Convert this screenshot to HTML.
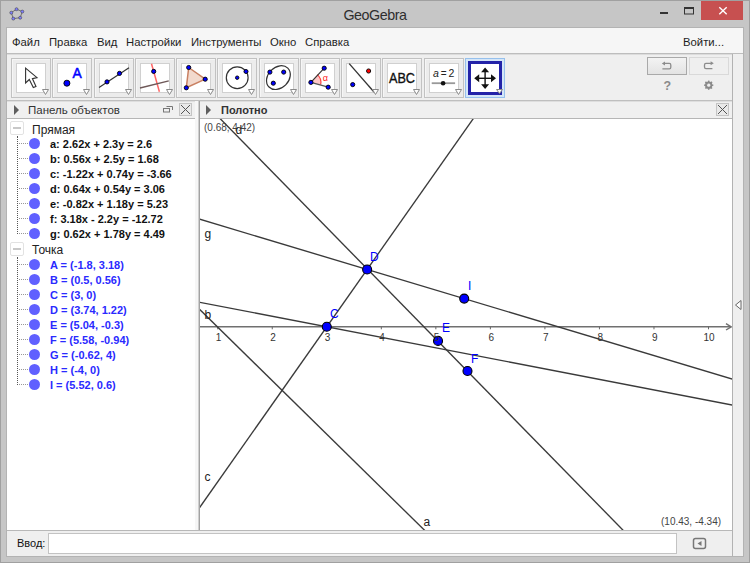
<!DOCTYPE html>
<html><head><meta charset="utf-8">
<style>
*{margin:0;padding:0;box-sizing:border-box}
html,body{width:750px;height:563px;overflow:hidden;background:#c6c6c6;font-family:"Liberation Sans",sans-serif;}
.a{position:absolute}
.t{position:absolute;white-space:nowrap;line-height:1}
#frame{left:0;top:0;width:750px;height:563px;border:1px solid #a0a0a0;background:#c6c6c6}
#content{left:6px;top:27px;width:738px;height:530px;background:#f0f0f0;border:1px solid #b3b3b3}
#menu{left:7px;top:28px;width:736px;height:26px;background:#f6f6f6;border-bottom:1px solid #bdbdbd}
.mi{position:absolute;top:36.5px;font-size:11.3px;line-height:1;color:#1e1e1e;white-space:nowrap}
#toolbar{left:7px;top:54px;width:726px;height:47px;background:#efefef;border-top:1px solid #dcdcdc;border-bottom:1px solid #bfbfbf}
.btn{position:absolute;top:58px;width:40px;height:40px;border:1px solid #c2c2c2;background:#ececec;box-shadow:inset 1px 1px 0 #f6f6f6}
.btn .in{position:absolute;left:4px;top:4px;width:30px;height:30px;background:#fff;border:1px solid #d0d0d0}
.btn svg{position:absolute;left:-1px;top:-1px}
#lp{left:7px;top:101px;width:188px;height:430px;background:#fff}
#lph{left:7px;top:101px;width:188px;height:18px;background:#f0f0f0;border-top:1px solid #dedede;border-bottom:1px solid #b6b6b6}
#split{left:195px;top:101px;width:5px;height:430px;background:linear-gradient(90deg,#f6f6f6 0,#f6f6f6 3px,#cfcfcf 3px,#cfcfcf 4px,#a2a2a2 4px)}
#gph{left:200px;top:101px;width:532px;height:18px;background:#f0f0f0;border-top:1px solid #dedede;border-bottom:1px solid #b6b6b6}
#gv{left:200px;top:119px;width:532px;height:411px;background:#fff}
#rs{left:732px;top:54px;width:11px;height:502px;background:#efefef;border-left:1px solid #b2b2b2}
#inp{left:7px;top:530px;width:725px;height:26px;background:#efefef;border-top:1px solid #b8b8b8}
#field{left:48px;top:533px;width:629px;height:21px;background:#fff;border:1px solid #c3c3c3}
.row{position:absolute;left:50px;font-size:11px;line-height:1;font-weight:bold;white-space:nowrap}
.dot{position:absolute;left:29px;width:11px;height:11px;border-radius:50%;background:#6060ff}
.lbl{position:absolute;font-size:12px;line-height:1;color:#0000ff;white-space:nowrap}
.glbl{position:absolute;font-size:12px;line-height:1;color:#222;white-space:nowrap}
.num{position:absolute;font-size:10px;line-height:1;color:#333;white-space:nowrap}
</style></head><body>
<div class="a" id="frame"></div>
<div class="t" style="left:0;top:8px;width:750px;text-align:center;font-size:14.3px;letter-spacing:-0.45px;color:#2e2e2e">GeoGebra</div>
<div class="a" id="content"></div>
<div class="a" id="menu"></div>
<div class="mi" style="left:12px">Файл</div>
<div class="mi" style="left:49px">Правка</div>
<div class="mi" style="left:97px">Вид</div>
<div class="mi" style="left:126px">Настройки</div>
<div class="mi" style="left:191px">Инструменты</div>
<div class="mi" style="left:270px">Окно</div>
<div class="mi" style="left:305px">Справка</div>
<div class="mi" style="left:683px">Войти...</div>
<div class="a" id="toolbar"></div>
<div class="a" id="rs"></div>
<div class="a" id="lp"></div>
<div class="a" id="lph"></div>
<div class="a" id="split"></div>
<div class="a" id="gph"></div>
<div class="a" id="gv"></div>
<div class="a" id="inp"></div>
<div class="a" id="field"></div>
<div class="t" style="left:17px;top:538px;font-size:11px;color:#111">Ввод:</div>
<div class="t" style="left:28px;top:105px;font-size:11.5px;color:#333">Панель объектов</div>
<div class="t" style="left:221px;top:105px;font-size:11px;font-weight:bold;color:#333">Полотно</div>

<div class="btn" style="left:11px"><div class="in"></div><svg width="40" height="40" viewBox="0 0 40 40"><path d="M14.6,10.1 L14.6,25 L18.3,21.5 L22.3,29.5 L25,28.4 L21.4,20.6 L26,19.6 Z" fill="#fff" stroke="#333" stroke-width="1.1" stroke-linejoin="miter"/><path d="M31.5,31.5 L37.5,31.5 L34.5,36.5 Z" fill="#fff" stroke="#8a8a8a" stroke-width="1"/></svg></div>
<div class="btn" style="left:52px"><div class="in"></div><svg width="40" height="40" viewBox="0 0 40 40"><circle cx="14.9" cy="25.2" r="3.02" fill="#0000ff" stroke="#000" stroke-width="0.9"/><text x="20.5" y="19.6" font-family="Liberation Sans" font-size="13.8" fill="#0000ff" stroke="#0000ff" stroke-width="0.5">A</text><path d="M31.5,31.5 L37.5,31.5 L34.5,36.5 Z" fill="#fff" stroke="#8a8a8a" stroke-width="1"/></svg></div>
<div class="btn" style="left:94px"><div class="in"></div><svg width="40" height="40" viewBox="0 0 40 40"><line x1="5" y1="29.5" x2="35" y2="9.8" stroke="#333" stroke-width="1.2"/><circle cx="13" cy="23.9" r="2.09" fill="#0000ff" stroke="#000" stroke-width="0.9"/><circle cx="25.5" cy="15.4" r="2.09" fill="#0000ff" stroke="#000" stroke-width="0.9"/><path d="M31.5,31.5 L37.5,31.5 L34.5,36.5 Z" fill="#fff" stroke="#8a8a8a" stroke-width="1"/></svg></div>
<div class="btn" style="left:135px"><div class="in"></div><svg width="40" height="40" viewBox="0 0 40 40"><line x1="16.5" y1="5.8" x2="24.4" y2="33.8" stroke="#ff6666" stroke-width="1.5"/><line x1="5" y1="30" x2="33.8" y2="22.8" stroke="#6e5858" stroke-width="1.3"/><circle cx="18.7" cy="13.4" r="2.09" fill="#0000ff" stroke="#000" stroke-width="0.9"/><path d="M31.5,31.5 L37.5,31.5 L34.5,36.5 Z" fill="#fff" stroke="#8a8a8a" stroke-width="1"/></svg></div>
<div class="btn" style="left:176px"><div class="in"></div><svg width="40" height="40" viewBox="0 0 40 40"><path d="M12.7,9.5 L29.2,21.2 L10.3,29.8 Z" fill="#f2d9cd" stroke="#c98062" stroke-width="1.5"/><circle cx="12.7" cy="9.5" r="2.09" fill="#0000ff" stroke="#000" stroke-width="0.9"/><circle cx="29.2" cy="21.2" r="2.09" fill="#0000ff" stroke="#000" stroke-width="0.9"/><circle cx="10.3" cy="29.8" r="2.09" fill="#0000ff" stroke="#000" stroke-width="0.9"/><path d="M31.5,31.5 L37.5,31.5 L34.5,36.5 Z" fill="#fff" stroke="#8a8a8a" stroke-width="1"/></svg></div>
<div class="btn" style="left:217px"><div class="in"></div><svg width="40" height="40" viewBox="0 0 40 40"><circle cx="20.2" cy="19.7" r="10.9" fill="none" stroke="#333" stroke-width="1.2"/><circle cx="20.2" cy="19.7" r="1.73" fill="#0000ff" stroke="#000" stroke-width="0.9"/><circle cx="29" cy="13.5" r="2.02" fill="#0000ff" stroke="#000" stroke-width="0.9"/><path d="M31.5,31.5 L37.5,31.5 L34.5,36.5 Z" fill="#fff" stroke="#8a8a8a" stroke-width="1"/></svg></div>
<div class="btn" style="left:259px"><div class="in"></div><svg width="40" height="40" viewBox="0 0 40 40"><ellipse cx="19.4" cy="19.6" rx="13.3" ry="10.3" transform="rotate(-45 19.4 19.6)" fill="none" stroke="#333" stroke-width="1.2"/><circle cx="10.9" cy="14.1" r="2.09" fill="#0000ff" stroke="#000" stroke-width="0.9"/><circle cx="24.7" cy="14.1" r="2.09" fill="#0000ff" stroke="#000" stroke-width="0.9"/><circle cx="14.3" cy="25.2" r="2.09" fill="#0000ff" stroke="#000" stroke-width="0.9"/><path d="M31.5,31.5 L37.5,31.5 L34.5,36.5 Z" fill="#fff" stroke="#8a8a8a" stroke-width="1"/></svg></div>
<div class="btn" style="left:300px"><div class="in"></div><svg width="40" height="40" viewBox="0 0 40 40"><path d="M10.9,24.4 L17.3,16.6 A10,10 0 0 1 20.6,26.6 Z" fill="#ffc8c8" stroke="none"/><path d="M17.3,16.6 A10,10 0 0 1 20.6,26.6" fill="none" stroke="#ff4040" stroke-width="1.2"/><line x1="10.9" y1="24.4" x2="24.2" y2="10.2" stroke="#333" stroke-width="1.2"/><line x1="10.9" y1="24.4" x2="28.2" y2="29.2" stroke="#555" stroke-width="1.2"/><circle cx="10.9" cy="24.4" r="2.09" fill="#0000ff" stroke="#000" stroke-width="0.9"/><circle cx="24.2" cy="10.2" r="2.09" fill="#0000ff" stroke="#000" stroke-width="0.9"/><circle cx="28.2" cy="29.2" r="2.09" fill="#0000ff" stroke="#000" stroke-width="0.9"/><text x="22.8" y="22.5" font-family="Liberation Sans" font-size="9" fill="#ff2020">α</text><path d="M31.5,31.5 L37.5,31.5 L34.5,36.5 Z" fill="#fff" stroke="#8a8a8a" stroke-width="1"/></svg></div>
<div class="btn" style="left:341px"><div class="in"></div><svg width="40" height="40" viewBox="0 0 40 40"><line x1="8.2" y1="5.6" x2="33" y2="34" stroke="#333" stroke-width="1.3"/><circle cx="11.7" cy="26.6" r="2.09" fill="#0000ff" stroke="#000" stroke-width="0.9"/><circle cx="27.6" cy="13" r="2.09" fill="#ff0000" stroke="#000" stroke-width="0.9"/><path d="M31.5,31.5 L37.5,31.5 L34.5,36.5 Z" fill="#fff" stroke="#8a8a8a" stroke-width="1"/></svg></div>
<div class="btn" style="left:382px"><div class="in"></div><svg width="40" height="40" viewBox="0 0 40 40"><text x="7" y="24.7" font-family="Liberation Sans" font-size="14" textLength="26" lengthAdjust="spacingAndGlyphs" fill="#111" stroke="#111" stroke-width="0.35">ABC</text><path d="M31.5,31.5 L37.5,31.5 L34.5,36.5 Z" fill="#fff" stroke="#8a8a8a" stroke-width="1"/></svg></div>
<div class="btn" style="left:424px"><div class="in"></div><svg width="40" height="40" viewBox="0 0 40 40"><text x="8.9" y="18.9" font-family="Liberation Sans" font-size="10.5" font-style="italic" fill="#222">a</text><text x="16.7" y="18.9" font-family="Liberation Sans" font-size="10" fill="#222">=</text><text x="24.6" y="18.9" font-family="Liberation Sans" font-size="10.5" fill="#222">2</text><line x1="7.7" y1="25.2" x2="31.1" y2="25.2" stroke="#999" stroke-width="1.8"/><circle cx="19.1" cy="25.2" r="2.3" fill="#111"/><path d="M31.5,31.5 L37.5,31.5 L34.5,36.5 Z" fill="#fff" stroke="#8a8a8a" stroke-width="1"/></svg></div>
<div class="a" style="left:465px;top:58px;width:40px;height:40px;border:1px solid #96c0ec;background:#d4e6f8"></div>
<div class="a" style="left:468px;top:61px;width:34px;height:34px;border:3px solid #2323a8;background:#fff"></div>
<svg class="a" style="left:465px;top:58px" width="40" height="40" viewBox="0 0 40 40"><line x1="20.1" y1="12" x2="20.1" y2="28.5" stroke="#111" stroke-width="1.4"/><line x1="11.5" y1="20.3" x2="28.5" y2="20.3" stroke="#111" stroke-width="1.4"/><path d="M20.1,9.6 L24.1,14.3 L16.1,14.3 Z M20.1,31 L24.1,26.3 L16.1,26.3 Z M9.2,20.3 L14.2,16.3 L14.2,24.3 Z M31,20.3 L26,16.3 L26,24.3 Z" fill="#111"/><path d="M31.5,31.5 L37.5,31.5 L34.5,35.5 Z" fill="#fff" stroke="#8a8a8a" stroke-width="1"/></svg>
<div class="a" style="left:10px;top:121px;width:14px;height:14px;border:1px solid #e2e2e2;border-radius:2px;background:#fff"></div>
<div class="a" style="left:13px;top:127px;width:8px;height:2px;background:#c8c8c8"></div>
<div class="t" style="left:32px;top:124px;font-size:12px;color:#222">Прямая</div>
<div class="a" style="left:17px;top:136px;width:1px;height:98px;border-left:1px dotted #555"></div>
<div class="a" style="left:19px;top:143px;width:9px;height:1px;border-top:1px dotted #999"></div>
<div class="dot" style="top:138px"></div>
<div class="row" style="top:138.8px;color:#111">a: 2.62x + 2.3y = 2.6</div>
<div class="a" style="left:19px;top:158px;width:9px;height:1px;border-top:1px dotted #999"></div>
<div class="dot" style="top:153px"></div>
<div class="row" style="top:153.8px;color:#111">b: 0.56x + 2.5y = 1.68</div>
<div class="a" style="left:19px;top:173px;width:9px;height:1px;border-top:1px dotted #999"></div>
<div class="dot" style="top:168px"></div>
<div class="row" style="top:168.8px;color:#111">c: -1.22x + 0.74y = -3.66</div>
<div class="a" style="left:19px;top:188px;width:9px;height:1px;border-top:1px dotted #999"></div>
<div class="dot" style="top:183px"></div>
<div class="row" style="top:183.8px;color:#111">d: 0.64x + 0.54y = 3.06</div>
<div class="a" style="left:19px;top:203px;width:9px;height:1px;border-top:1px dotted #999"></div>
<div class="dot" style="top:198px"></div>
<div class="row" style="top:198.8px;color:#111">e: -0.82x + 1.18y = 5.23</div>
<div class="a" style="left:19px;top:218px;width:9px;height:1px;border-top:1px dotted #999"></div>
<div class="dot" style="top:213px"></div>
<div class="row" style="top:213.8px;color:#111">f: 3.18x - 2.2y = -12.72</div>
<div class="a" style="left:19px;top:233px;width:9px;height:1px;border-top:1px dotted #999"></div>
<div class="dot" style="top:228px"></div>
<div class="row" style="top:228.8px;color:#111">g: 0.62x + 1.78y = 4.49</div>
<div class="a" style="left:10px;top:242px;width:14px;height:14px;border:1px solid #e2e2e2;border-radius:2px;background:#fff"></div>
<div class="a" style="left:13px;top:248px;width:8px;height:2px;background:#c8c8c8"></div>
<div class="t" style="left:32px;top:244px;font-size:12px;color:#222">Точка</div>
<div class="a" style="left:17px;top:257px;width:1px;height:128px;border-left:1px dotted #555"></div>
<div class="a" style="left:19px;top:264px;width:9px;height:1px;border-top:1px dotted #999"></div>
<div class="dot" style="top:259px"></div>
<div class="row" style="top:259.8px;color:#2a2aff">A = (-1.8, 3.18)</div>
<div class="a" style="left:19px;top:279px;width:9px;height:1px;border-top:1px dotted #999"></div>
<div class="dot" style="top:274px"></div>
<div class="row" style="top:274.8px;color:#2a2aff">B = (0.5, 0.56)</div>
<div class="a" style="left:19px;top:294px;width:9px;height:1px;border-top:1px dotted #999"></div>
<div class="dot" style="top:289px"></div>
<div class="row" style="top:289.8px;color:#2a2aff">C = (3, 0)</div>
<div class="a" style="left:19px;top:309px;width:9px;height:1px;border-top:1px dotted #999"></div>
<div class="dot" style="top:304px"></div>
<div class="row" style="top:304.8px;color:#2a2aff">D = (3.74, 1.22)</div>
<div class="a" style="left:19px;top:324px;width:9px;height:1px;border-top:1px dotted #999"></div>
<div class="dot" style="top:319px"></div>
<div class="row" style="top:319.8px;color:#2a2aff">E = (5.04, -0.3)</div>
<div class="a" style="left:19px;top:339px;width:9px;height:1px;border-top:1px dotted #999"></div>
<div class="dot" style="top:334px"></div>
<div class="row" style="top:334.8px;color:#2a2aff">F = (5.58, -0.94)</div>
<div class="a" style="left:19px;top:354px;width:9px;height:1px;border-top:1px dotted #999"></div>
<div class="dot" style="top:349px"></div>
<div class="row" style="top:349.8px;color:#2a2aff">G = (-0.62, 4)</div>
<div class="a" style="left:19px;top:369px;width:9px;height:1px;border-top:1px dotted #999"></div>
<div class="dot" style="top:364px"></div>
<div class="row" style="top:364.8px;color:#2a2aff">H = (-4, 0)</div>
<div class="a" style="left:19px;top:384px;width:9px;height:1px;border-top:1px dotted #999"></div>
<div class="dot" style="top:379px"></div>
<div class="row" style="top:379.8px;color:#2a2aff">I = (5.52, 0.6)</div>
<svg class="a" style="left:0;top:0" width="750" height="563" viewBox="0 0 750 563">
<defs><clipPath id="gc"><rect x="200" y="119" width="532" height="411"/></clipPath></defs>
<g clip-path="url(#gc)">
<line x1="200" y1="326.8" x2="731" y2="326.8" stroke="#707070" stroke-width="1.6"/>
<path d="M726,323.6 L731.2,326.8 L726,330.0" fill="none" stroke="#707070" stroke-width="1.4"/>
<line x1="217.73" y1="326.8" x2="217.73" y2="329.3" stroke="#666" stroke-width="1"/>
<line x1="272.26" y1="326.8" x2="272.26" y2="329.3" stroke="#666" stroke-width="1"/>
<line x1="326.79" y1="326.8" x2="326.79" y2="329.3" stroke="#666" stroke-width="1"/>
<line x1="381.32" y1="326.8" x2="381.32" y2="329.3" stroke="#666" stroke-width="1"/>
<line x1="435.85" y1="326.8" x2="435.85" y2="329.3" stroke="#666" stroke-width="1"/>
<line x1="490.38" y1="326.8" x2="490.38" y2="329.3" stroke="#666" stroke-width="1"/>
<line x1="544.91" y1="326.8" x2="544.91" y2="329.3" stroke="#666" stroke-width="1"/>
<line x1="599.44" y1="326.8" x2="599.44" y2="329.3" stroke="#666" stroke-width="1"/>
<line x1="653.97" y1="326.8" x2="653.97" y2="329.3" stroke="#666" stroke-width="1"/>
<line x1="708.50" y1="326.8" x2="708.50" y2="329.3" stroke="#666" stroke-width="1"/>
<line x1="197.86" y1="307.70" x2="426.42" y2="532.10" stroke="#3a3a3a" stroke-width="1.35"/>
<line x1="197.05" y1="301.75" x2="734.95" y2="405.60" stroke="#3a3a3a" stroke-width="1.35"/>
<line x1="198.27" y1="509.42" x2="474.75" y2="116.55" stroke="#3a3a3a" stroke-width="1.35"/>
<line x1="624.94" y1="532.14" x2="218.40" y2="116.86" stroke="#3a3a3a" stroke-width="1.35"/>
<line x1="197.13" y1="218.43" x2="734.87" y2="379.87" stroke="#3a3a3a" stroke-width="1.35"/>
<circle cx="326.79" cy="326.80" r="4.5" fill="#0000ff" stroke="#000" stroke-width="1.1"/>
<circle cx="367.14" cy="269.46" r="4.5" fill="#0000ff" stroke="#000" stroke-width="1.1"/>
<circle cx="438.03" cy="340.90" r="4.5" fill="#0000ff" stroke="#000" stroke-width="1.1"/>
<circle cx="467.48" cy="370.98" r="4.5" fill="#0000ff" stroke="#000" stroke-width="1.1"/>
<circle cx="464.21" cy="298.60" r="4.5" fill="#0000ff" stroke="#000" stroke-width="1.1"/>
</g></svg>
<div class="num" style="left:215.7px;top:332.5px">1</div>
<div class="num" style="left:270.3px;top:332.5px">2</div>
<div class="num" style="left:324.8px;top:332.5px">3</div>
<div class="num" style="left:379.3px;top:332.5px">4</div>
<div class="num" style="left:433.8px;top:332.5px">5</div>
<div class="num" style="left:488.4px;top:332.5px">6</div>
<div class="num" style="left:542.9px;top:332.5px">7</div>
<div class="num" style="left:597.4px;top:332.5px">8</div>
<div class="num" style="left:652.0px;top:332.5px">9</div>
<div class="num" style="left:703.5px;top:332.5px">10</div>
<div class="t" style="left:204px;top:123px;font-size:10px;color:#444">(0.68, 4.42)</div>
<div class="t" style="left:661px;top:517px;font-size:10px;color:#444">(10.43, -4.34)</div>
<div class="glbl" style="left:235.5px;top:123.5px">d</div>
<div class="glbl" style="left:204.5px;top:227.5px">g</div>
<div class="glbl" style="left:204.5px;top:308.5px">b</div>
<div class="glbl" style="left:204.5px;top:470.5px">c</div>
<div class="glbl" style="left:423.5px;top:515.5px">a</div>
<div class="lbl" style="left:330px;top:307.8px">C</div>
<div class="lbl" style="left:370px;top:250.8px">D</div>
<div class="lbl" style="left:442px;top:321.8px">E</div>
<div class="lbl" style="left:471px;top:352.8px">F</div>
<div class="lbl" style="left:468px;top:279.8px">I</div>
<div class="a" style="left:701px;top:1px;width:42px;height:19px;background:#c75050"></div>
<svg class="a" style="left:0;top:0" width="750" height="30" viewBox="0 0 750 30"><path d="M719.3,7.3 L726.7,14.3 M726.7,7.3 L719.3,14.3" stroke="#fff" stroke-width="1.4"/><rect x="660" y="12" width="8" height="2" fill="#333"/><rect x="684.5" y="7.5" width="9" height="6.5" fill="none" stroke="#333" stroke-width="1"/><rect x="684" y="7" width="10" height="2" fill="#333"/><path d="M16.5,9.2 L22.3,11.6 L20.2,17.7 L13.3,18.6 L11.3,12.7 Z" fill="none" stroke="#666" stroke-width="0.9"/><circle cx="16.5" cy="9.2" r="1.5" fill="#8080ff" stroke="#333" stroke-width="0.5"/><circle cx="22.3" cy="11.6" r="1.5" fill="#8080ff" stroke="#333" stroke-width="0.5"/><circle cx="20.2" cy="17.7" r="1.5" fill="#8080ff" stroke="#333" stroke-width="0.5"/><circle cx="13.3" cy="18.6" r="1.5" fill="#8080ff" stroke="#333" stroke-width="0.5"/><circle cx="11.3" cy="12.7" r="1.5" fill="#8080ff" stroke="#333" stroke-width="0.5"/></svg>
<div class="a" style="left:647px;top:57px;width:40px;height:18px;border:1px solid #a9a9a9;background:linear-gradient(#f3f3f3,#e3e3e3)"></div>
<div class="a" style="left:689px;top:57px;width:40px;height:18px;border:1px solid #d9d9d9;background:#efefef"></div>
<svg class="a" style="left:640px;top:54px" width="95" height="46" viewBox="0 0 95 46"><path d="M24,9.4 L29.3,9.4 Q30.8,9.4 30.8,11 L30.8,13.2 Q30.8,14.8 29.3,14.8 L22.4,14.8" fill="none" stroke="#8c8c8c" stroke-width="1.3"/><path d="M21.8,9.4 L25,7.4 L25,11.4 Z" fill="#8c8c8c"/><path d="M71,9.3 L66,9.3 Q64.5,9.3 64.5,11 L64.5,13 Q64.5,14.6 66,14.6 L72.4,14.6" fill="none" stroke="#8c8c8c" stroke-width="1.3"/><path d="M73.8,9.3 L70.6,7.3 L70.6,11.3 Z" fill="#8c8c8c"/><text x="23.6" y="35.9" font-family="Liberation Sans" font-weight="bold" font-size="12.5" fill="#8a8a8a">?</text><g transform="translate(68.7,31.2)"><circle r="2.9" fill="none" stroke="#8a8a8a" stroke-width="1.5"/><g stroke="#8a8a8a" stroke-width="1.5"><line x1="0" y1="-4.6" x2="0" y2="4.6"/><line x1="-4.6" y1="0" x2="4.6" y2="0"/><line x1="-3.3" y1="-3.3" x2="3.3" y2="3.3"/><line x1="-3.3" y1="3.3" x2="3.3" y2="-3.3"/></g><circle r="1.6" fill="#efefef"/></g></svg>
<svg class="a" style="left:0;top:100px" width="750" height="20" viewBox="0 0 750 20"><path d="M14,5 L19,10 L14,15 Z" fill="#5e5e5e"/><path d="M206,5 L211,10 L206,15 Z" fill="#5e5e5e"/><rect x="163.5" y="8.5" width="6" height="3.5" fill="none" stroke="#777" stroke-width="1"/><path d="M166.5,6.5 L172.5,6.5 L172.5,10" fill="none" stroke="#777" stroke-width="1"/><rect x="179.5" y="3.5" width="12" height="12" fill="#e9e9e9" stroke="#c4c4c4" stroke-width="1"/><path d="M181,5 L190,14 M190,5 L181,14" stroke="#555" stroke-width="1"/><rect x="716.5" y="3.5" width="12" height="12" fill="#e9e9e9" stroke="#c4c4c4" stroke-width="1"/><path d="M718,5 L727,14 M727,5 L718,14" stroke="#555" stroke-width="1"/></svg>
<svg class="a" style="left:732px;top:290px" width="11" height="30" viewBox="0 0 11 30"><path d="M3.5,15 L9,10.5 L9,19.5 Z" fill="#fff" stroke="#666" stroke-width="1"/></svg>
<svg class="a" style="left:690px;top:535px" width="20" height="18" viewBox="0 0 20 18"><rect x="3.5" y="3.5" width="12" height="10" rx="2" fill="none" stroke="#777" stroke-width="1.5"/><path d="M7.5,8.5 L11.5,6 L11.5,11 Z" fill="#777"/></svg>
</body></html>
